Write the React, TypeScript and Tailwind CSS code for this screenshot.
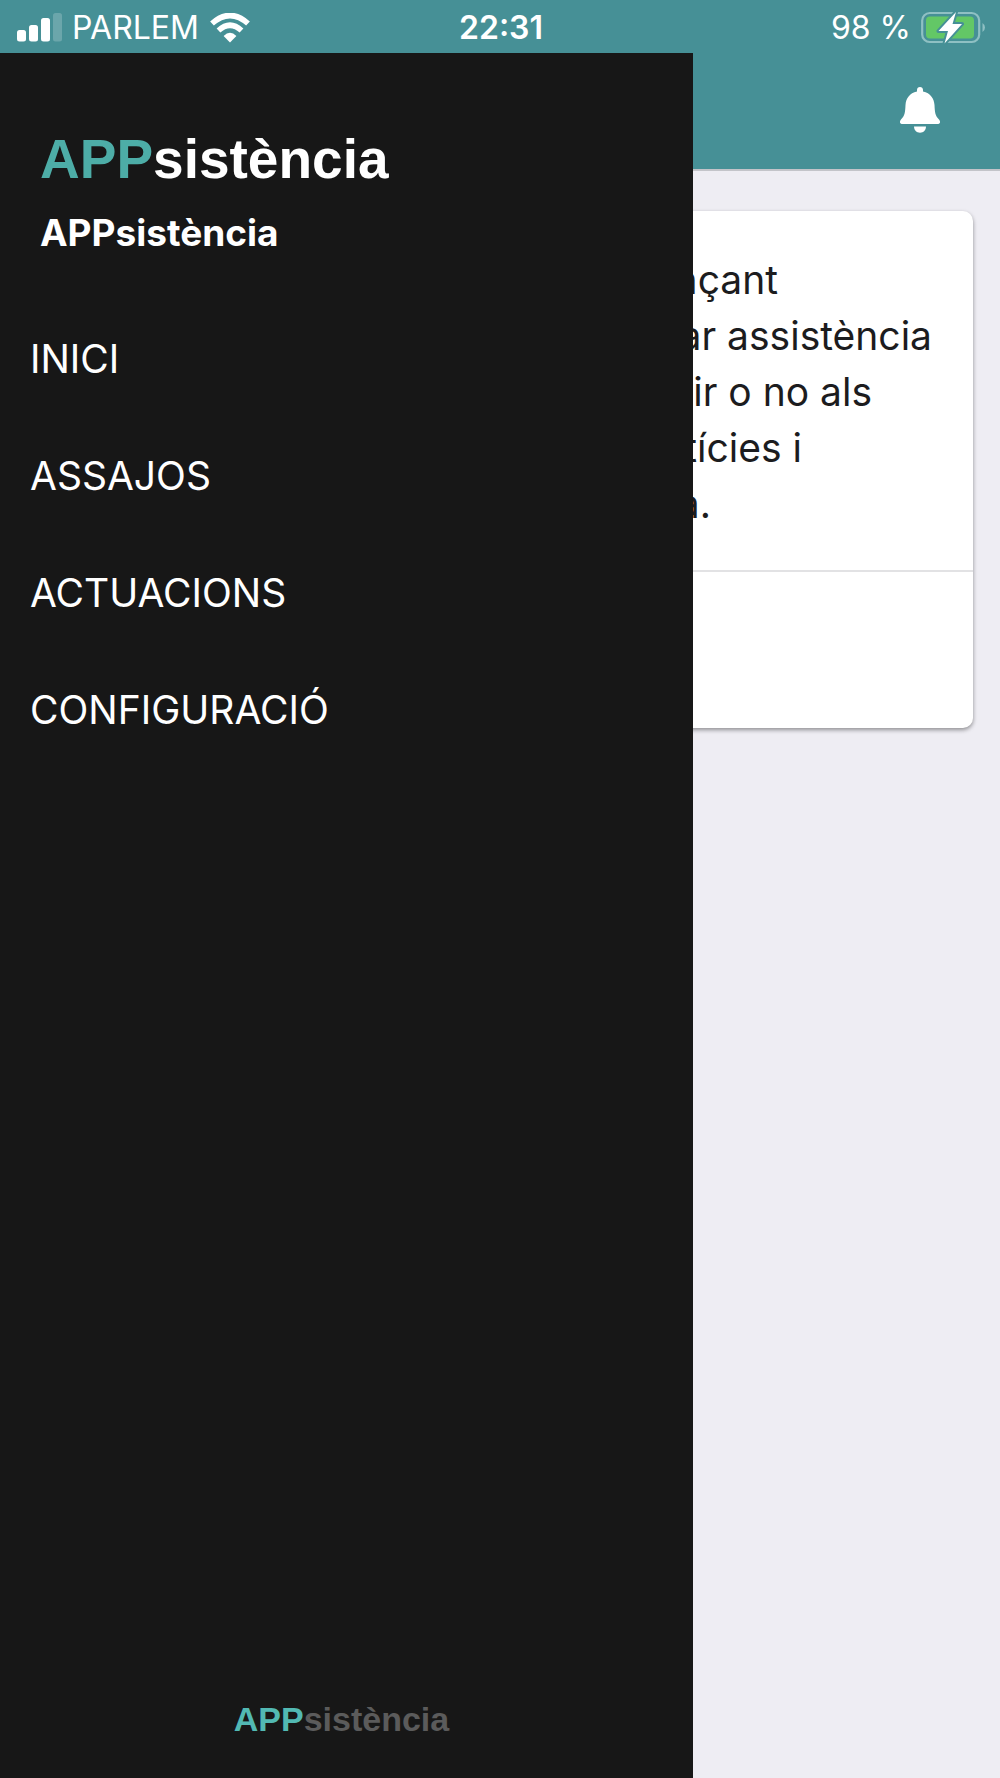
import React from 'react';

interface NavItem {
  label: string;
  href: string;
}

interface Line {
  text: string;
  inset: string;
}

const navItems: NavItem[] = [
  { label: 'INICI', href: '#inici' },
  { label: 'ASSAJOS', href: '#assajos' },
  { label: 'ACTUACIONS', href: '#actuacions' },
  { label: 'CONFIGURACIÓ', href: '#configuracio' },
];

// Line endings that stay visible beside the open menu
const introLines: Line[] = [
  { text: 'nçant', inset: 'pr-[155px]' },
  { text: 'ar assistència', inset: 'pr-[1px]' },
  { text: 'nir o no als', inset: 'pr-[61px]' },
  { text: 'tícies i', inset: 'pr-[131px]' },
  { text: 'a.', inset: 'pr-[222px]' },
];

const SignalIcon = () => (
  <svg width="46" height="30" viewBox="0 0 46 30" fill="#fff" aria-hidden="true">
    <rect x="0" y="17" width="9" height="11.5" rx="2.5" />
    <rect x="12" y="12" width="9" height="16.5" rx="2.5" />
    <rect x="24" y="5" width="9" height="23.5" rx="2.5" />
    <rect x="36" y="0" width="9" height="28.5" rx="2.5" opacity="0.2" />
  </svg>
);

const WifiIcon = () => (
  <svg width="40" height="30" viewBox="0 0 40 30" aria-hidden="true">
    <path d="M20 29.5 13.6 23Q20 16.5 26.4 23Z" fill="#fff" />
    <path d="M8.5 17.5Q20 7 31.5 17.5" fill="none" stroke="#fff" strokeWidth="5.6" />
    <path d="M2 10.5Q20 -5.5 38 10.5" fill="none" stroke="#fff" strokeWidth="5.6" />
  </svg>
);

const BatteryIcon = () => (
  <svg width="64" height="34" viewBox="0 0 64 34" aria-hidden="true">
    <rect x="1.2" y="2" width="57" height="29" rx="7.5" fill="none" stroke="#8fc0c3" strokeWidth="2.2" />
    <path d="M61.5 12Q64 13.5 64 16.5T61.5 21Z" fill="#8fc0c3" />
    <rect x="5" y="5.5" width="48" height="22" rx="4" fill="#63c766" />
    <path
      d="M35 1 17.5 20H27L23.500 32.500 41 13H31.500Z"
      fill="#fff"
      stroke="#469096"
      strokeWidth="4"
      strokeLinejoin="round"
      paintOrder="stroke"
    />
  </svg>
);

const BellIcon = () => (
  <svg width="40" height="46" viewBox="0 0 40 46" fill="#fff" aria-hidden="true">
    <path d="M20 0C21.8 0 23 1.3 23 3V4.5C30.5 6 34 11.5 34.5 18C34.9 26 35.2 28.5 39 32.5C41 35 40 37 37.5 37H2.5C0 37 -1 35 1 32.5C4.8 28.5 5.1 26 5.5 18C6 11.5 9.5 6 17 4.5V3C17 1.3 18.2 0 20 0Z" />
    <path d="M14 39.5H26C26 43 23.5 45.7 20 45.7S14 43 14 39.5Z" />
  </svg>
);

const StatusBar = () => (
  <div className="grid h-[53px] grid-cols-[1fr_auto_1fr] items-center bg-[#469096] pl-[17px] pr-[15px] pt-[2px] text-[32px] leading-[40px] text-white">
    <div className="flex items-center">
      <SignalIcon />
      <span className="ml-[9px] mr-[11px]">PARLEM</span>
      <WifiIcon />
    </div>
    <span className="font-semibold">22:31</span>
    <div className="flex items-center justify-end gap-[10px]">
      <span>98 %</span>
      <BatteryIcon />
    </div>
  </div>
);

const SideMenu = () => (
  <aside className="absolute inset-y-0 left-0 flex w-[69.3%] flex-col bg-[#171717] text-white">
    <div className="px-10 pt-[76px]">
      <div className="font-['Liberation_Sans',Arial,sans-serif] text-[55px] font-bold leading-[60px]">
        <span className="text-[#4dada7]">APP</span>sistència
      </div>
      <h1 className="mt-5 text-[37px] font-bold leading-[48px]">APPsistència</h1>
    </div>
    <nav className="mt-11">
      {navItems.map((item) => (
        <a key={item.href} href={item.href} className="flex h-[117px] items-center px-[30px] text-[39px]">
          {item.label}
        </a>
      ))}
    </nav>
    <div className="mt-auto pb-[39px] pr-[10px] text-center font-['Liberation_Sans',Arial,sans-serif] text-[34px] font-bold leading-[40px] text-[#5b5b5b]">
      <span className="text-[#52b9b3]">APP</span>sistència
    </div>
  </aside>
);

export default function App() {
  return (
    <div className="flex min-h-screen flex-col bg-[#eeedf3] font-[Inter,'Liberation_Sans',sans-serif]">
      <StatusBar />
      <div className="relative flex-1 overflow-hidden">
        <header className="flex h-[118px] items-center justify-end border-b-2 border-[#c3c4c9] bg-[#469096] pb-[3px] pr-[60px]">
          <button type="button" aria-label="Notificacions">
            <BellIcon />
          </button>
        </header>

        <main className="px-[27px] pt-10">
          <section className="rounded-[10px] bg-white shadow-[0_2px_4px_rgba(0,0,0,0.4)]">
            <div className="border-b-2 border-[#e2e2e4] px-10 pb-[38px] pt-[41px] text-right text-[39px] leading-[56px] text-[#1c1c1e]">
              {introLines.map((line) => (
                <p key={line.text} className={line.inset}>{line.text}</p>
              ))}
            </div>
            <div className="h-[156px]" />
          </section>
        </main>

        <SideMenu />
      </div>
    </div>
  );
}
